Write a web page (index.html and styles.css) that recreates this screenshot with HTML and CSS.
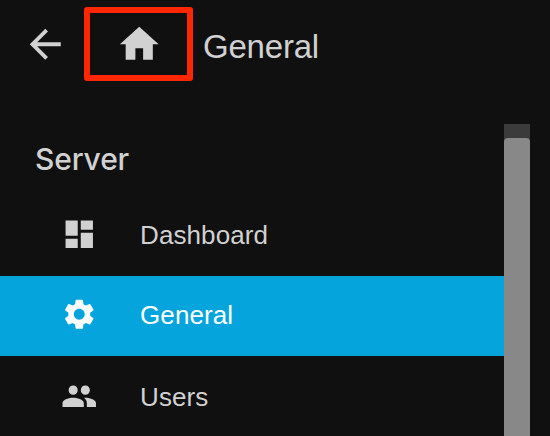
FILE: index.html
```html
<!DOCTYPE html>
<html lang="en">
<head>
<meta charset="utf-8">
<title>General</title>
<link rel="stylesheet" href="styles.css">
</head>
<body>
<header class="topbar">
  <svg class="back" viewBox="0 0 24 24"><path d="M20 11H7.83l5.59-5.59L12 4l-8 8 8 8 1.41-1.41L7.83 13H20v-2z"/></svg>
  <div class="home-frame">
    <svg class="home" viewBox="0 0 24 24"><path d="M10 20v-6h4v6h5v-8h3L12 3 2 12h3v8z"/></svg>
  </div>
  <h1 class="title">General</h1>
</header>
<main class="panel">
  <nav class="menu">
    <h2 class="section">Server</h2>
    <a class="item">
      <svg class="icon" viewBox="0 0 24 24"><path d="M3 13h8V3H3v10zm0 8h8v-6H3v6zm10 0h8V11h-8v10zm0-18v6h8V3h-8z"/></svg>
      <span class="label">Dashboard</span>
    </a>
    <a class="item selected">
      <svg class="icon" viewBox="0 0 24 24"><path d="M19.14 12.94c.04-.3.06-.61.06-.94 0-.32-.02-.64-.07-.94l2.03-1.58c.18-.14.23-.41.12-.61l-1.92-3.32c-.12-.22-.37-.29-.59-.22l-2.39.96c-.5-.38-1.03-.7-1.62-.94l-.36-2.54c-.04-.24-.24-.41-.48-.41h-3.84c-.24 0-.43.17-.47.41l-.36 2.54c-.59.24-1.13.57-1.62.94l-2.39-.96c-.22-.08-.47 0-.59.22L2.74 8.87c-.12.21-.08.47.12.61l2.03 1.58c-.05.3-.09.63-.09.94s.02.64.07.94l-2.03 1.58c-.18.14-.23.41-.12.61l1.92 3.32c.12.22.37.29.59.22l2.39-.96c.5.38 1.03.7 1.62.94l.36 2.54c.05.24.24.41.48.41h3.84c.24 0 .44-.17.47-.41l.36-2.54c.59-.24 1.13-.56 1.62-.94l2.39.96c.22.08.47 0 .59-.22l1.92-3.32c.12-.22.07-.47-.12-.61l-2.01-1.58zM12 15.6c-1.98 0-3.6-1.62-3.6-3.6s1.62-3.6 3.6-3.6 3.6 1.62 3.6 3.6-1.62 3.6-3.6 3.6z"/></svg>
      <span class="label">General</span>
    </a>
    <a class="item last">
      <svg class="icon" viewBox="0 0 24 24"><path d="M16 11c1.66 0 2.99-1.34 2.99-3S17.66 5 16 5c-1.66 0-3 1.34-3 3s1.34 3 3 3zm-8 0c1.66 0 2.99-1.34 2.99-3S9.66 5 8 5C6.34 5 5 6.34 5 8s1.34 3 3 3zm0 2c-2.33 0-7 1.17-7 3.5V19h14v-2.500c0-2.330-4.670-3.500-7-3.500zm8 0c-.29 0-.62.02-.97.05 1.160.840 1.970 1.970 1.970 3.450V19h6v-2.500c0-2.330-4.670-3.500-7-3.500z"/></svg>
      <span class="label">Users</span>
    </a>
  </nav>
  <div class="scrollbar"><div class="thumb"></div></div>
</main>
</body>
</html>
```
FILE: styles.css
```css
* { box-sizing: border-box; }
body {
  margin: 0;
  height: 436px;
  overflow: hidden;
  background: #101010;
  color: #d1d1d1;
  font-family: "Liberation Sans", Arial, sans-serif;
}
svg { display: block; flex: none; fill: currentColor; }
.topbar {
  display: flex;
  align-items: flex-start;
  height: 124px;
  padding: 7px 0 0 22px;
}
.back { width: 46.500px; height: 46.500px; margin-top: 14px; }
.home-frame {
  width: 109px;
  height: 74px;
  margin-left: 15.500px;
  padding: 8px 0 0 26px;
  border: 6px solid #ff2600;
  border-radius: 3px;
}
.home { width: 46.500px; height: 46.500px; }
.title {
  margin: 20px 0 0 10px;
  font-size: 33px;
  line-height: 40px;
  font-weight: 400;
  letter-spacing: -0.2px;
}
.panel { display: flex; height: 312px; }
.menu { width: 504px; }
.section {
  height: 72px;
  margin: 0;
  padding: 15px 0 0 35px;
  font-family: Inter, sans-serif;
  font-size: 30px;
  line-height: 40px;
  font-weight: 450;
  letter-spacing: -0.15px;
}
.item {
  display: flex;
  align-items: center;
  height: 80px;
  padding: 0 0 4px 60.500px;
}
.item .icon { width: 36.500px; height: 36.500px; }
.label {
  margin: 1px 0 0 43px;
  font-size: 26px;
  line-height: 32px;
  letter-spacing: 0.1px;
}
.selected { background: #05a4dc; color: #fff; }
.last { padding-bottom: 0; }
.last .label { margin-top: 2px; }
.scrollbar { width: 26px; padding-top: 14px; background: #3b3b3b; }
.thumb { height: 298px; border-radius: 4px 4px 0 0; background: #888; }
```
